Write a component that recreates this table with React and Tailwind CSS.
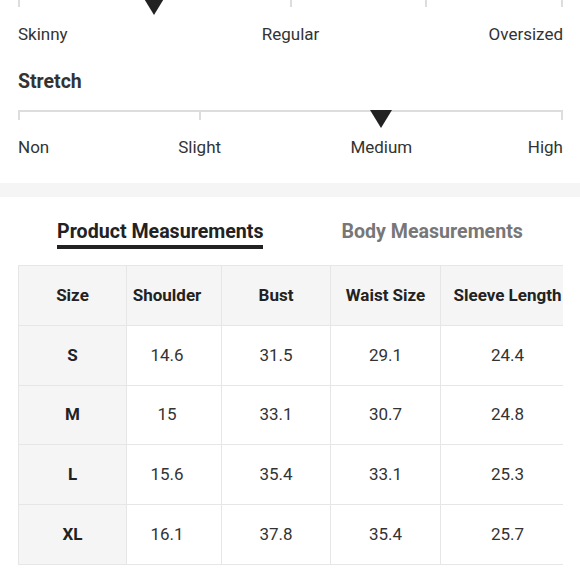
import React from 'react';

const font = { fontFamily: 'Roboto, "Liberation Sans", sans-serif' };

function Marker({ left }) {
  return (
    <div
      className="absolute top-0 w-0 h-0 border-l-[11px] border-r-[11px] border-t-[18px] border-l-transparent border-r-transparent border-t-[#222] -translate-x-1/2"
      style={{ left }}
    />
  );
}

function Scale({ ticks, labels, marker, className }) {
  return (
    <div className={className}>
      <div className="relative">
        <div className="h-[2px] bg-[#dddddd]" />
        <div className="flex justify-between">
          {Array.from({ length: ticks }).map((_, i) => (
            <div key={i} className="w-[2px] h-[8px] bg-[#dddddd]" />
          ))}
        </div>
        <Marker left={marker} />
      </div>
      <div className="flex justify-between mt-[15px] text-[17px] leading-6 text-[#333]">
        {labels.map((l, i) => (
          <div
            key={l}
            className={
              'w-0 flex whitespace-nowrap ' +
              (i === 0 ? 'justify-start' : i === labels.length - 1 ? 'justify-end' : 'justify-center')
            }
          >
            <span>{l}</span>
          </div>
        ))}
      </div>
    </div>
  );
}

const rows = [
  ['S', '14.6', '31.5', '29.1', '24.4'],
  ['M', '15', '33.1', '30.7', '24.8'],
  ['L', '15.6', '35.4', '33.1', '25.3'],
  ['XL', '16.1', '37.8', '35.4', '25.7'],
];

const heads = ['Size', 'Shoulder', 'Bust', 'Waist Size', 'Sleeve Length'];
const widths = ['w-[108px]', 'w-[95px]', 'w-[109px]', 'w-[110px]', 'w-[134px]'];

export default function App() {
  return (
    <div className="w-[580px] h-[579px] overflow-hidden bg-white" style={font}>
      <div className="pl-[18px] pr-[17px]">
        <Scale
          className="-mt-[3px]"
          ticks={5}
          marker="25%"
          labels={['Skinny', 'Regular', 'Oversized']}
        />
        <div className="mt-[24px] text-[19.5px] leading-6 font-bold text-[#333]">Stretch</div>
        <Scale
          className="mt-[16px]"
          ticks={4}
          marker="66.67%"
          labels={['Non', 'Slight', 'Medium', 'High']}
        />
      </div>

      <div className="mt-[24px] h-[14px] bg-[#f5f5f5]" />

      <div className="flex justify-center gap-[78px] pt-[23px]">
        <div className="flex flex-col">
          <span className="text-[19.6px] leading-6 font-bold text-[#222]">Product Measurements</span>
          <span className="mt-[1px] h-[4px] bg-[#222]" />
        </div>
        <span className="text-[19.6px] leading-6 font-bold text-[#777]">Body Measurements</span>
      </div>

      <div className="mt-[16px] ml-[18px] w-[545px] overflow-hidden">
        <table className="border-collapse table-fixed w-[556px] text-[17px]">
          <thead>
            <tr className="bg-[#f5f5f5] h-[60px]">
              {heads.map((h, i) => (
                <th
                  key={h}
                  className={
                    widths[i] +
                    ' border border-[#e6e6e6] font-bold text-[#222] whitespace-nowrap' +
                    (i === 1 ? ' pr-[14px]' : '')
                  }
                >
                  {h}
                </th>
              ))}
            </tr>
          </thead>
          <tbody>
            {rows.map((r) => (
              <tr key={r[0]} className="h-[59.7px]">
                {r.map((v, i) => (
                  <td
                    key={i}
                    className={
                      'border border-[#e6e6e6] text-center ' +
                      (i === 0 ? 'bg-[#f5f5f5] font-bold text-[#222]' : 'text-[#333]') +
                      (i === 1 ? ' pr-[14px]' : '')
                    }
                  >
                    {v}
                  </td>
                ))}
              </tr>
            ))}
          </tbody>
        </table>
      </div>
    </div>
  );
}
